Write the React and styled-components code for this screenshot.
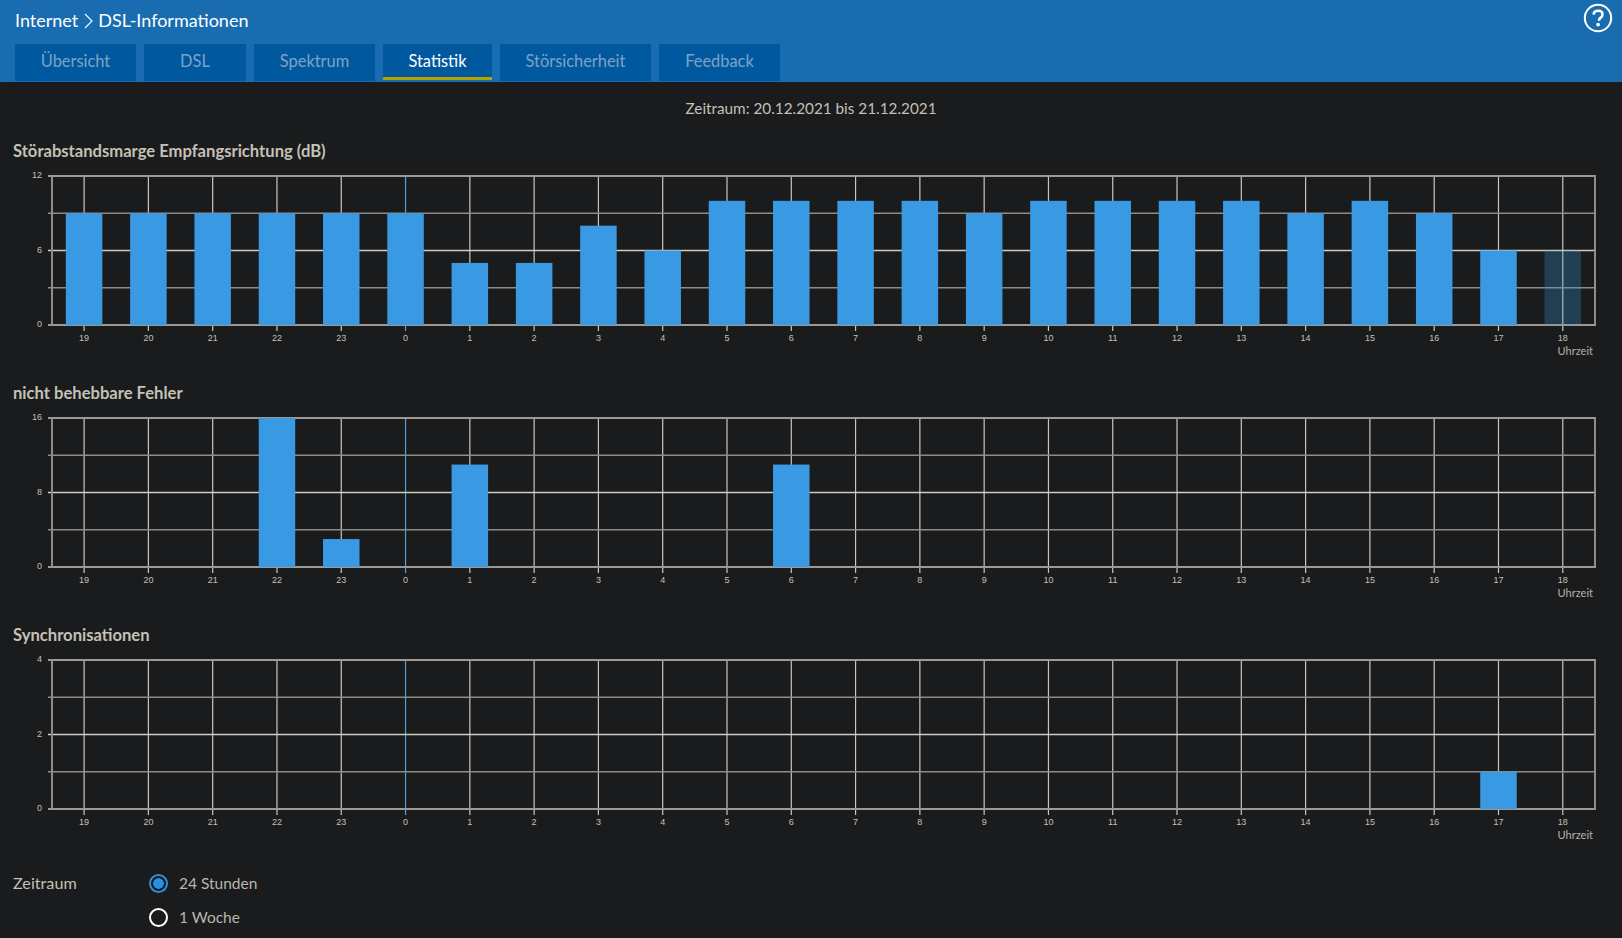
import styled, { createGlobalStyle } from "styled-components";

const GlobalStyle = createGlobalStyle`
	html, body {
		margin: 0;
		padding: 0;
		background: #1a1b1d;
		overflow: hidden;
	}
	body {
		font-family: "Lato", "Noto Sans", sans-serif;
	}
`;

const TABS = [
	{ label: "Übersicht", width: 121 },
	{ label: "DSL", width: 102 },
	{ label: "Spektrum", width: 121 },
	{ label: "Statistik", width: 109 },
	{ label: "Störsicherheit", width: 151 },
	{ label: "Feedback", width: 121 },
];
const HOURS = [19, 20, 21, 22, 23, 0, 1, 2, 3, 4, 5, 6, 7, 8, 9, 10, 11, 12, 13, 14, 15, 16, 17, 18];

const CHARTS = [
	{
		title: "Störabstandsmarge Empfangsrichtung (dB)",
		max: 12,
		values: [9, 9, 9, 9, 9, 9, 5, 5, 8, 6, 10, 10, 10, 10, 9, 10, 10, 10, 10, 9, 10, 9, 6, 6],
		current: true,
	},
	{
		title: "nicht behebbare Fehler",
		max: 16,
		values: [0, 0, 0, 16, 3, 0, 11, 0, 0, 0, 0, 11, 0, 0, 0, 0, 0, 0, 0, 0, 0, 0, 0, 0],
	},
	{
		title: "Synchronisationen",
		max: 4,
		values: [0, 0, 0, 0, 0, 0, 0, 0, 0, 0, 0, 0, 0, 0, 0, 0, 0, 0, 0, 0, 0, 0, 1, 0],
	},
];

const PLOT_LEFT = 52;
const PLOT_RIGHT = 1595;
const PLOT_TOP = 15;
const PLOT_BOTTOM = 164;
const FIRST_TICK = 84.1;
const TICK_STEP = 64.29;
const BAR_WIDTH = 36.5;

const BarChart = ({ max, values, current }) => {
	const plotHeight = PLOT_BOTTOM - PLOT_TOP;
	const rows = [0, 1, 2, 3, 4];
	return (
		<ChartSvg viewBox="0 0 1622 220">
			{HOURS.map((hour, i) => {
				const x = FIRST_TICK + i * TICK_STEP;
				return (
					<line
						key={i}
						x1={x}
						x2={x}
						y1={PLOT_TOP}
						y2={PLOT_BOTTOM + 6}
						stroke={hour === 0 ? "#5f9fd0" : "#c9c7bd"}
						strokeWidth="1.2"
					/>
				);
			})}
			{rows.map((r) => {
				const y = PLOT_TOP + (plotHeight * r) / 4;
				const outer = r === 0 || r === 4;
				return (
					<line
						key={r}
						x1={48}
						x2={PLOT_RIGHT + 1}
						y1={y}
						y2={y}
						stroke={outer ? "#9c9a92" : r === 2 ? "#cfccc0" : "#8e8c85"}
						strokeWidth={outer ? 2 : 1.3}
					/>
				);
			})}
			<line x1={PLOT_LEFT} x2={PLOT_LEFT} y1={PLOT_TOP} y2={PLOT_BOTTOM} stroke="#8f8d87" strokeWidth="2" />
			<line x1={PLOT_RIGHT} x2={PLOT_RIGHT} y1={PLOT_TOP} y2={PLOT_BOTTOM} stroke="#8f8d87" strokeWidth="2" />
			{values.map((v, i) => {
				if (!v) return null;
				const h = (plotHeight * v) / max;
				const dim = current && i === values.length - 1;
				return (
					<rect
						key={i}
						x={FIRST_TICK + i * TICK_STEP - BAR_WIDTH / 2}
						y={PLOT_BOTTOM - h}
						width={BAR_WIDTH}
						height={h}
						fill="#3a99e3"
						fillOpacity={dim ? 0.28 : 1}
					/>
				);
			})}
			{[max, max / 2, 0].map((v, i) => (
				<AxisText key={v} x="42" y={PLOT_TOP + (plotHeight * i) / 2 + 2} textAnchor="end">
					{v}
				</AxisText>
			))}
			{HOURS.map((hour, i) => (
				<AxisText key={i} x={FIRST_TICK + i * TICK_STEP} y={PLOT_BOTTOM + 16} textAnchor="middle">
					{hour}
				</AxisText>
			))}
			<UnitText x="1593" y={PLOT_BOTTOM + 30} textAnchor="end">
				Uhrzeit
			</UnitText>
		</ChartSvg>
	);
};

const App = () => {
	return (
		<>
			<GlobalStyle />
			<Header>
				<TitleRow>
					<Breadcrumb>
						Internet
						<Chevron viewBox="0 0 9 16">
							<path d="M1 1l7 7-7 7" fill="none" stroke="#fff" strokeWidth="1.1" />
						</Chevron>
						DSL-Informationen
					</Breadcrumb>
					<HelpIcon viewBox="0 0 30 30">
						<circle cx="15" cy="15" r="13.2" fill="none" stroke="#fff" strokeWidth="2" />
						<path
							d="M10.6 11.6c.2-2.5 2-3.9 4.5-3.9 2.6 0 4.4 1.5 4.4 3.7 0 1.7-.9 2.6-2.1 3.5-1 .7-1.4 1.2-1.4 2.5v.3"
							fill="none"
							stroke="#fff"
							strokeWidth="2.6"
						/>
						<circle cx="15.1" cy="21.6" r="1.9" fill="#fff" />
					</HelpIcon>
				</TitleRow>
				<TabBar>
					{TABS.map((tab) => (
						<Tab key={tab.label} $active={tab.label === "Statistik"} $width={tab.width}>
							{tab.label}
						</Tab>
					))}
				</TabBar>
			</Header>
			<Main>
				<Period>Zeitraum: 20.12.2021 bis 21.12.2021</Period>
				{CHARTS.map((chart) => (
					<Section key={chart.title}>
						<SectionTitle>{chart.title}</SectionTitle>
						<BarChart max={chart.max} values={chart.values} current={chart.current} />
					</Section>
				))}
				<RangeForm>
					<RangeLabel>Zeitraum</RangeLabel>
					<RadioGroup>
						<RadioRow>
							<Radio $checked />
							24 Stunden
						</RadioRow>
						<RadioRow>
							<Radio />1 Woche
						</RadioRow>
					</RadioGroup>
				</RangeForm>
			</Main>
		</>
	);
};

export default App;

const Header = styled.header`
	height: 82px;
	background: #1a6cb0;
	box-sizing: border-box;
	padding: 0 9px 0 15px;
	display: flex;
	flex-direction: column;
`;

const TitleRow = styled.div`
	height: 44px;
	display: flex;
	justify-content: space-between;
	align-items: flex-start;
`;

const Breadcrumb = styled.div`
	margin-top: 10px;
	color: #fff;
	font-size: 18px;
	line-height: 21px;
	display: flex;
	align-items: center;
`;

const Chevron = styled.svg`
	width: 9px;
	height: 16px;
	margin: 0 5px 0 6px;
`;

const HelpIcon = styled.svg`
	width: 30px;
	height: 30px;
	margin-top: 3px;
`;

const TabBar = styled.nav`
	display: flex;
	gap: 8px;
`;

const Tab = styled.div`
	width: ${({ $width }) => $width}px;
	height: ${({ $active }) => ($active ? "36px" : "37px")};
	box-sizing: border-box;
	background: #00589e;
	color: ${({ $active }) => ($active ? "#fff" : "#7fa3c4")};
	font-size: 16.4px;
	line-height: 33px;
	text-align: center;
	border-bottom: 3px solid ${({ $active }) => ($active ? "#b3a400" : "#00589e")};
`;

const Main = styled.main`
	color: #c4c1b6;
`;

const Period = styled.div`
	padding-top: 15px;
	height: 41px;
	box-sizing: border-box;
	font-size: 15.3px;
	line-height: 22px;
	text-align: center;
	margin-bottom: 16px;
`;

const Section = styled.section`
	height: 242px;
`;

const SectionTitle = styled.h2`
	margin: 0;
	padding-left: 13px;
	height: 22px;
	font-size: 16.6px;
	font-weight: 700;
	line-height: 24px;
	color: #c4c1b6;
`;

const ChartSvg = styled.svg`
	display: block;
	width: 1622px;
	height: 220px;
`;

const AxisText = styled.text`
	font-family: "Liberation Sans", Arial, sans-serif;
	font-size: 9px;
	fill: #c4c1b6;
`;

const UnitText = styled.text`
	font-family: "Lato", sans-serif;
	font-size: 11px;
	fill: #b5b2a8;
`;

const RangeForm = styled.div`
	display: flex;
	margin-top: 7px;
	padding-left: 13px;
	font-size: 16.2px;
`;

const RangeLabel = styled.div`
	width: 136px;
	line-height: 22px;
`;

const RadioGroup = styled.div`
	display: flex;
	flex-direction: column;
	gap: 12px;
	font-size: 15.5px;
	color: #b9b6ab;
`;

const RadioRow = styled.label`
	display: flex;
	align-items: center;
	gap: 11px;
	height: 22px;
	line-height: 22px;
`;

const Radio = styled.span`
	width: 19px;
	height: 19px;
	box-sizing: border-box;
	border-radius: 50%;
	border: 2px solid ${({ $checked }) => ($checked ? "#2b8fdd" : "#fff")};
	background: ${({ $checked }) => ($checked ? "radial-gradient(circle, #2b8fdd 0 5px, transparent 5.5px)" : "transparent")};
`;
